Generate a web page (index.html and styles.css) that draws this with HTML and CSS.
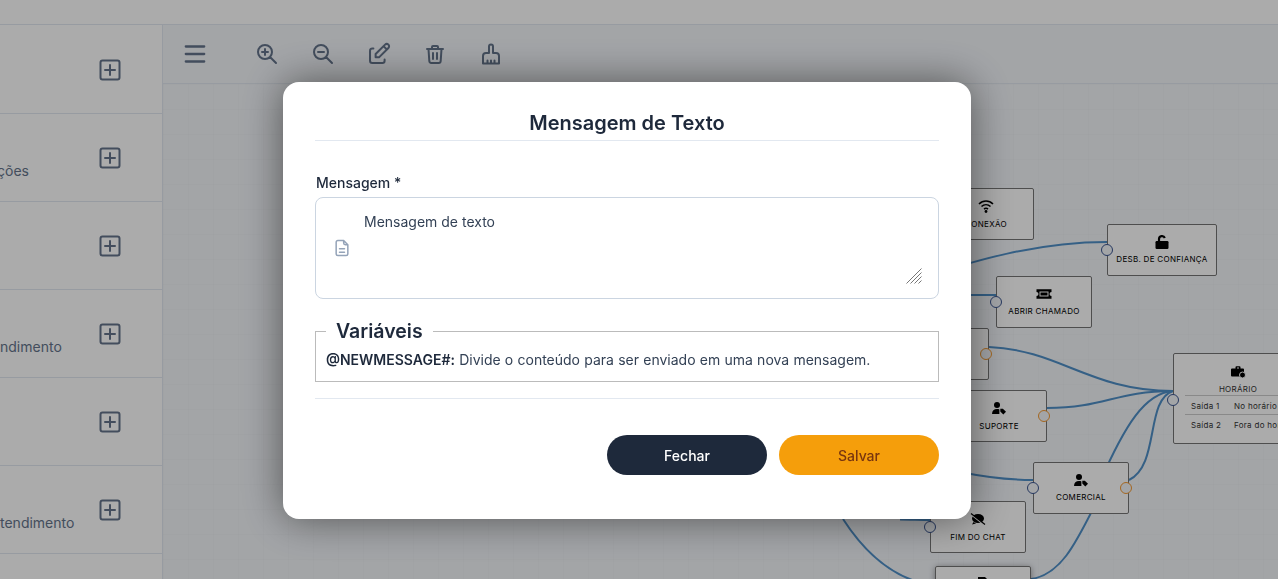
FILE: index.html
```html
<!DOCTYPE html>
<html lang="pt-BR">
<head>
    <meta charset="UTF-8">
    <meta name="viewport" content="width=device-width, initial-scale=1.0">
    <title>Fluxo de Mensagens</title>
    <link rel="stylesheet" href="styles.css">
</head>
<body>
    <!-- icons used by the flow nodes -->
    <svg class="sprite" aria-hidden="true">
        <symbol id="i-usertag" viewBox="0 0 16 16">
            <circle cx="6" cy="5" r="3" fill="currentColor"/>
            <path d="M1 14c0-3.200 2-5 5-5 1 0 1.700 0.100 2.400 0.400v4.600z" fill="currentColor"/>
            <path d="M9.300 8.800h2.600l3.100 2.900-2.700 2.700-3-3z" fill="currentColor"/>
        </symbol>
    </svg>

    <div class="page">
        <header class="topbar"></header>
        <div class="main">
            <aside class="sidebar">
                <div class="side-row">
                    <span class="side-text"></span>
                    <svg class="add-icon" viewBox="0 0 24 24"><rect x="2.5" y="2.5" width="19" height="19" rx="2"/><path d="M7 12h10M12 7v10"/></svg>
                </div>
                <div class="side-row">
                    <span class="side-text side-text-cut">ções</span>
                    <svg class="add-icon" viewBox="0 0 24 24"><rect x="2.5" y="2.5" width="19" height="19" rx="2"/><path d="M7 12h10M12 7v10"/></svg>
                </div>
                <div class="side-row">
                    <span class="side-text"></span>
                    <svg class="add-icon" viewBox="0 0 24 24"><rect x="2.5" y="2.5" width="19" height="19" rx="2"/><path d="M7 12h10M12 7v10"/></svg>
                </div>
                <div class="side-row">
                    <span class="side-text">ndimento</span>
                    <svg class="add-icon" viewBox="0 0 24 24"><rect x="2.5" y="2.5" width="19" height="19" rx="2"/><path d="M7 12h10M12 7v10"/></svg>
                </div>
                <div class="side-row">
                    <span class="side-text"></span>
                    <svg class="add-icon" viewBox="0 0 24 24"><rect x="2.5" y="2.5" width="19" height="19" rx="2"/><path d="M7 12h10M12 7v10"/></svg>
                </div>
                <div class="side-row">
                    <span class="side-text">tendimento</span>
                    <svg class="add-icon" viewBox="0 0 24 24"><rect x="2.5" y="2.5" width="19" height="19" rx="2"/><path d="M7 12h10M12 7v10"/></svg>
                </div>
            </aside>

            <section class="editor">
                <div class="toolbar">
                    <svg class="tool tool-menu" viewBox="0 0 24 24"><path d="M2.800 4.500h18.400M2.800 12h18.400M2.800 19.500h18.400"/></svg>
                    <svg class="tool" viewBox="0 0 24 24"><path d="M3 10a7 7 0 1 0 14 0a7 7 0 1 0-14 0M7 10h6M10 7v6M21 21l-6-6"/></svg>
                    <svg class="tool" viewBox="0 0 24 24"><path d="M3 10a7 7 0 1 0 14 0a7 7 0 1 0-14 0M7 10h6M21 21l-6-6"/></svg>
                    <svg class="tool tool-edit" viewBox="1.300 1.300 21.400 21.400"><path d="M7 7h-1a2 2 0 0 0-2 2v9a2 2 0 0 0 2 2h9a2 2 0 0 0 2-2v-1M20.385 6.585a2.100 2.100 0 0 0-2.970-2.970l-8.415 8.385v3h3l8.385-8.415zM16 5l3 3"/></svg>
                    <svg class="tool" viewBox="0 0 24 24"><path d="M4 7h16M10 11v6M14 11v6M5.500 7l.8 12a2 2 0 0 0 2 1.900h7.400a2 2 0 0 0 2-1.900L18.500 7M9 7V5a1 1 0 0 1 1-1h4a1 1 0 0 1 1 1v2"/></svg>
                    <svg class="tool" viewBox="0 0 24 24"><path d="M10 11V4.500a2 2 0 0 1 4 0V11h3a3 3 0 0 1 3 3v7.500H4V14a3 3 0 0 1 3-3zM8.500 21.500v-3M12 21.500v-3M15.500 21.500v-3"/></svg>
                </div>

                <div class="flow">
                    <svg class="edges" viewBox="163 84 1115 495">
                        <path d="M900 285C980 258 1040 242 1107 242"/>
                        <path d="M960 295H996"/>
                        <path d="M989 347C1060 350 1090 391 1173 391"/>
                        <path d="M1047 408C1105 408 1115 391 1173 391"/>
                        <path d="M1100 482C1125 425 1145 393 1173 391"/>
                        <path d="M1129 480C1160 465 1145 400 1173 391"/>
                        <path d="M960 472C990 478 1010 480 1033 480"/>
                        <path d="M1031 579C1060 575 1075 545 1095 505"/>
                        <path d="M843 519C865 553 888 572 915 581"/>
                        <path d="M900 519.500C910 519.500 920 520 930 520"/>
                    </svg>

                    <div class="node node-conexao">
                        <svg class="node-icon" viewBox="0 0 16 16"><path class="line" d="M1 6c4-4 10-4 14 0M3.500 8.500c2.600-2.400 6.400-2.400 9 0M6 11c1.200-.9 2.800-.9 4 0"/><circle cx="8" cy="13.500" r="1.400" fill="currentColor"/></svg>
                        <span>CONEXÃO</span>
                    </div>
                    <div class="node node-desb">
                        <svg class="node-icon" viewBox="0 0 16 16"><path class="line line-thick" d="M5 8V5a3 3 0 0 1 5.800-1"/><rect x="1.500" y="7" width="13" height="8" rx="1.200" fill="currentColor"/></svg>
                        <span>DESB. DE CONFIANÇA</span>
                        <i class="handle"></i>
                    </div>
                    <div class="node node-chamado">
                        <svg class="node-icon" viewBox="0 0 16 16"><path fill-rule="evenodd" fill="currentColor" d="M0.500 3.200h15v2.800a2 2 0 0 0 0 4v2.800h-15V10a2 2 0 0 0 0-4zM3.500 5.500v5h9v-5z"/><rect x="4.500" y="6.500" width="7" height="3" fill="currentColor"/></svg>
                        <span>ABRIR CHAMADO</span>
                        <i class="handle"></i>
                    </div>
                    <div class="node node-oculto">
                        <i class="handle handle-out"></i>
                    </div>
                    <div class="node node-suporte">
                        <svg class="node-icon"><use href="#i-usertag"/></svg>
                        <span>SUPORTE</span>
                        <i class="handle handle-out"></i>
                    </div>
                    <div class="node node-comercial">
                        <svg class="node-icon"><use href="#i-usertag"/></svg>
                        <span>COMERCIAL</span>
                        <i class="handle"></i>
                        <i class="handle handle-out"></i>
                    </div>
                    <div class="node node-fim">
                        <svg class="node-icon" viewBox="0 0 16 16"><ellipse cx="8" cy="7.500" rx="6" ry="4.500" fill="currentColor"/><path d="M3.500 11l-1.500 2.500 4-1z" fill="currentColor"/><path class="cut" d="M1 3.500l14 11"/><path class="cut-line" d="M1 2.500l14 11"/></svg>
                        <span>FIM DO CHAT</span>
                        <i class="handle"></i>
                    </div>
                    <div class="node node-baixo">
                        <svg class="node-icon" viewBox="0 0 16 16"><path d="M3 1h7l3 3v11H3z" fill="currentColor"/></svg>
                    </div>
                    <div class="node node-horario">
                        <svg class="node-icon" viewBox="0 0 16 16"><path d="M5.500 4.500V3.200a1 1 0 0 1 1-1h3a1 1 0 0 1 1 1v1.300H13a1 1 0 0 1 1 1v7H2a1 1 0 0 1-1-1v-6a1 1 0 0 1 1-1zM7 3.400v1.100h2V3.400z" fill="currentColor"/><circle class="clock" cx="12.500" cy="11" r="3"/></svg>
                        <span>HORÁRIO</span>
                        <div class="exit-row"><b>Saída 1</b><b>No horário</b></div>
                        <div class="exit-row"><b>Saída 2</b><b>Fora do horário</b></div>
                        <i class="handle"></i>
                    </div>
                </div>
            </section>
        </div>
    </div>

    <div class="overlay">
        <div class="modal">
            <h2 class="modal-title">Mensagem de Texto</h2>

            <label class="field-label" for="mensagem">Mensagem *</label>
            <div class="text-field">
                <svg class="field-icon" viewBox="0 0 24 24"><path d="M14 3H7a2 2 0 0 0-2 2v14a2 2 0 0 0 2 2h10a2 2 0 0 0 2-2V8zM14 3v3a2 2 0 0 0 2 2h3M9 13h6M9 17h6"/></svg>
                <textarea id="mensagem" class="field-input">Mensagem de texto</textarea>
                <svg class="resize-mark" viewBox="0 0 16 16"><path d="M0.500 15.500l15-15M4.500 15.500l11-11M8.500 15.500l7-7M12.500 15.500l3-3"/></svg>
            </div>

            <fieldset class="vars">
                <legend>Variáveis</legend>
                <p><strong>@NEWMESSAGE#:</strong> Divide o conteúdo para ser enviado em uma nova mensagem.</p>
            </fieldset>

            <div class="actions">
                <button class="btn btn-close">Fechar</button>
                <button class="btn btn-save">Salvar</button>
            </div>
        </div>
    </div>
</body>
</html>
```

FILE: styles.css
```css
* {
    box-sizing: border-box;
}
html, body {
    height: 100%;
}
body {
    margin: 0;
    font-family: Inter, "Liberation Sans", sans-serif;
    color: #1e293b;
    background-color: #fff;
    overflow: hidden;
}
.sprite {
    display: none;
}

/* page behind the modal */
.page {
    display: flex;
    flex-direction: column;
    height: 100%;
}
.topbar {
    flex: 0 0 25px;
    background-color: #fff;
    border-bottom: 1px solid #e2e8f0;
}
.main {
    flex: 1;
    display: flex;
    min-height: 0;
}
.sidebar {
    flex: 0 0 163px;
    padding-top: 1px;
    background-color: #fff;
    border-right: 1px solid #e2e8f0;
    overflow: hidden;
}
.side-row {
    display: flex;
    justify-content: space-between;
    align-items: center;
    height: 88px;
    padding-right: 40px;
    border-bottom: 1px solid #e2e8f0;
}
.side-text {
    align-self: flex-end;
    margin-bottom: 20px;
    font-size: 14px;
    line-height: 20px;
    color: #64748b;
}
.side-text-cut {
    margin-left: -3px;
}
.add-icon {
    width: 24px;
    height: 24px;
    fill: none;
    stroke: #64748b;
    stroke-width: 2;
    stroke-linecap: round;
    margin-top: 1px;
}

.editor {
    flex: 1;
    display: flex;
    flex-direction: column;
    min-width: 0;
    background-color: #f3f6fa;
}
.toolbar {
    flex: 0 0 59px;
    display: flex;
    align-items: center;
    gap: 32px;
    padding-left: 20px;
    border-bottom: 1px solid #e2e8f0;
}
.tool {
    width: 24px;
    height: 24px;
    fill: none;
    stroke: #64748b;
    stroke-width: 2;
    stroke-linecap: round;
    stroke-linejoin: round;
}
.tool-menu {
    margin-right: 16px;
    stroke-width: 2.300;
}
.tool-edit {
    stroke-width: 1.800;
}

/* flow diagram */
.flow {
    flex: 1;
    position: relative;
    overflow: hidden;
    background-image:
        linear-gradient(rgba(0, 0, 0, 0.012) 1px, transparent 1px),
        linear-gradient(90deg, rgba(0, 0, 0, 0.012) 1px, transparent 1px);
    background-size: 25px 25px;
}
.edges {
    position: absolute;
    left: 0;
    top: 0;
    width: 1115px;
    height: 495px;
    fill: none;
    stroke: #4f8fc7;
    stroke-width: 2;
}
.node {
    position: absolute;
    display: flex;
    flex-direction: column;
    align-items: center;
    width: 96px;
    height: 52px;
    padding-top: 9px;
    background-color: #fff;
    border: 1px solid #757575;
    border-radius: 2px;
    color: #000;
    font-size: 8px;
    line-height: 12px;
    font-weight: 400;
    letter-spacing: 0.3px;
}
.node-icon {
    width: 16px;
    height: 16px;
    margin-bottom: 3px;
    flex: none;
}
.node-icon .line {
    fill: none;
    stroke: currentColor;
    stroke-width: 1.600;
}
.node-icon .line-thick {
    stroke-width: 2.200;
}
.node-icon .cut {
    stroke: #fff;
    stroke-width: 1.500;
}
.node-icon .cut-line {
    stroke: currentColor;
    stroke-width: 1.200;
}
.node-icon .clock {
    fill: currentColor;
    stroke: #fff;
    stroke-width: 1;
}
.handle {
    position: absolute;
    left: -7px;
    top: 50%;
    width: 12px;
    height: 12px;
    margin-top: -6px;
    border: 1.500px solid #3a5590;
    border-radius: 50%;
    background-color: #f3f6fa;
}
.handle-out {
    left: auto;
    right: -4px;
    border-color: #f59a30;
}
.node-conexao { left: 775px; top: 104px; }
.node-desb { left: 944px; top: 140px; width: 110px; }
.node-chamado { left: 833px; top: 192px; }
.node-oculto { left: 730px; top: 244px; }
.node-suporte { left: 788px; top: 306px; }
.node-comercial { left: 870px; top: 378px; }
.node-fim { left: 767px; top: 417px; }
.node-conexao span,
.node-suporte span,
.node-fim span {
    margin-top: 1px;
}
.node-baixo {
    left: 772px;
    top: 482px;
    box-shadow: 0 1px 6px rgba(0, 0, 0, 0.4);
}
.node-horario {
    left: 1010px;
    top: 269px;
    width: 130px;
    height: 91px;
    padding: 10px 11px 0;
}
.node-horario > span {
    color: #333;
}
.node-horario .handle {
    top: 46px;
}
.exit-row {
    display: grid;
    grid-template-columns: 43px 1fr;
    align-self: stretch;
    height: 20px;
    padding-left: 6px;
    border-top: 1px solid #ccc;
    line-height: 20px;
    white-space: nowrap;
    color: #333;
}
.exit-row + .exit-row {
    margin-top: -1px;
}
.exit-row b {
    font-weight: 400;
}

/* modal */
.overlay {
    position: fixed;
    inset: 0;
    display: flex;
    align-items: flex-start;
    padding: 82px 0 0 283px;
    background-color: rgba(0, 0, 0, 0.33);
}
.modal {
    width: 688px;
    height: 437px;
    padding: 26px 32px 0;
    background-color: #fff;
    border-radius: 16px;
    box-shadow: 0 0 40px rgba(0, 0, 0, 0.5);
}
.modal-title {
    margin: 0 0 32px;
    padding-bottom: 2px;
    font-size: 20px;
    line-height: 30px;
    font-weight: 600;
    text-align: center;
    border-bottom: 1px solid #e2e8f0;
}
.field-label {
    display: block;
    margin: 0 0 4px 1px;
    font-size: 14px;
    line-height: 20px;
    font-weight: 500;
}
.text-field {
    position: relative;
    display: flex;
    align-items: flex-start;
    height: 102px;
    padding: 6px 15px 13px 16px;
    border: 1px solid #cbd5e1;
    border-radius: 8px;
}
.field-icon {
    flex: none;
    width: 20px;
    height: 20px;
    margin-top: 34px;
    fill: none;
    stroke: #94a3b8;
    stroke-width: 1.800;
    stroke-linejoin: round;
    stroke-linecap: round;
}
.field-input {
    flex: 1;
    height: 100%;
    padding: 8px 12px;
    border: 0;
    outline: 0;
    resize: none;
    font-family: inherit;
    font-size: 14px;
    line-height: 20px;
    color: #334155;
}
.resize-mark {
    position: absolute;
    right: 16px;
    bottom: 14px;
    width: 16px;
    height: 16px;
    stroke: #777;
    stroke-width: 1;
    fill: none;
}
.vars {
    margin: 21px 0 0;
    padding: 0 10px 11px;
    border: 1px solid #bbb;
}
.vars legend {
    padding: 0 10px;
    font-size: 19.500px;
    line-height: 22px;
    font-weight: 600;
}
.vars p {
    margin: 8px 0 0;
    font-size: 14px;
    line-height: 20px;
    word-spacing: 0.300px;
    color: #334155;
}
.vars strong {
    font-weight: 600;
    color: #1e293b;
}
.actions {
    display: flex;
    justify-content: flex-end;
    gap: 12px;
    margin-top: 16px;
    padding-top: 36px;
    border-top: 1px solid #e2e8f0;
}
.btn {
    width: 160px;
    height: 40px;
    border: 0;
    border-radius: 20px;
    font-family: inherit;
    font-size: 14px;
    font-weight: 500;
    cursor: pointer;
}
.btn-close {
    background-color: #1e293b;
    color: #fff;
}
.btn-save {
    background-color: #f59e0b;
    color: #78350f;
}
```
